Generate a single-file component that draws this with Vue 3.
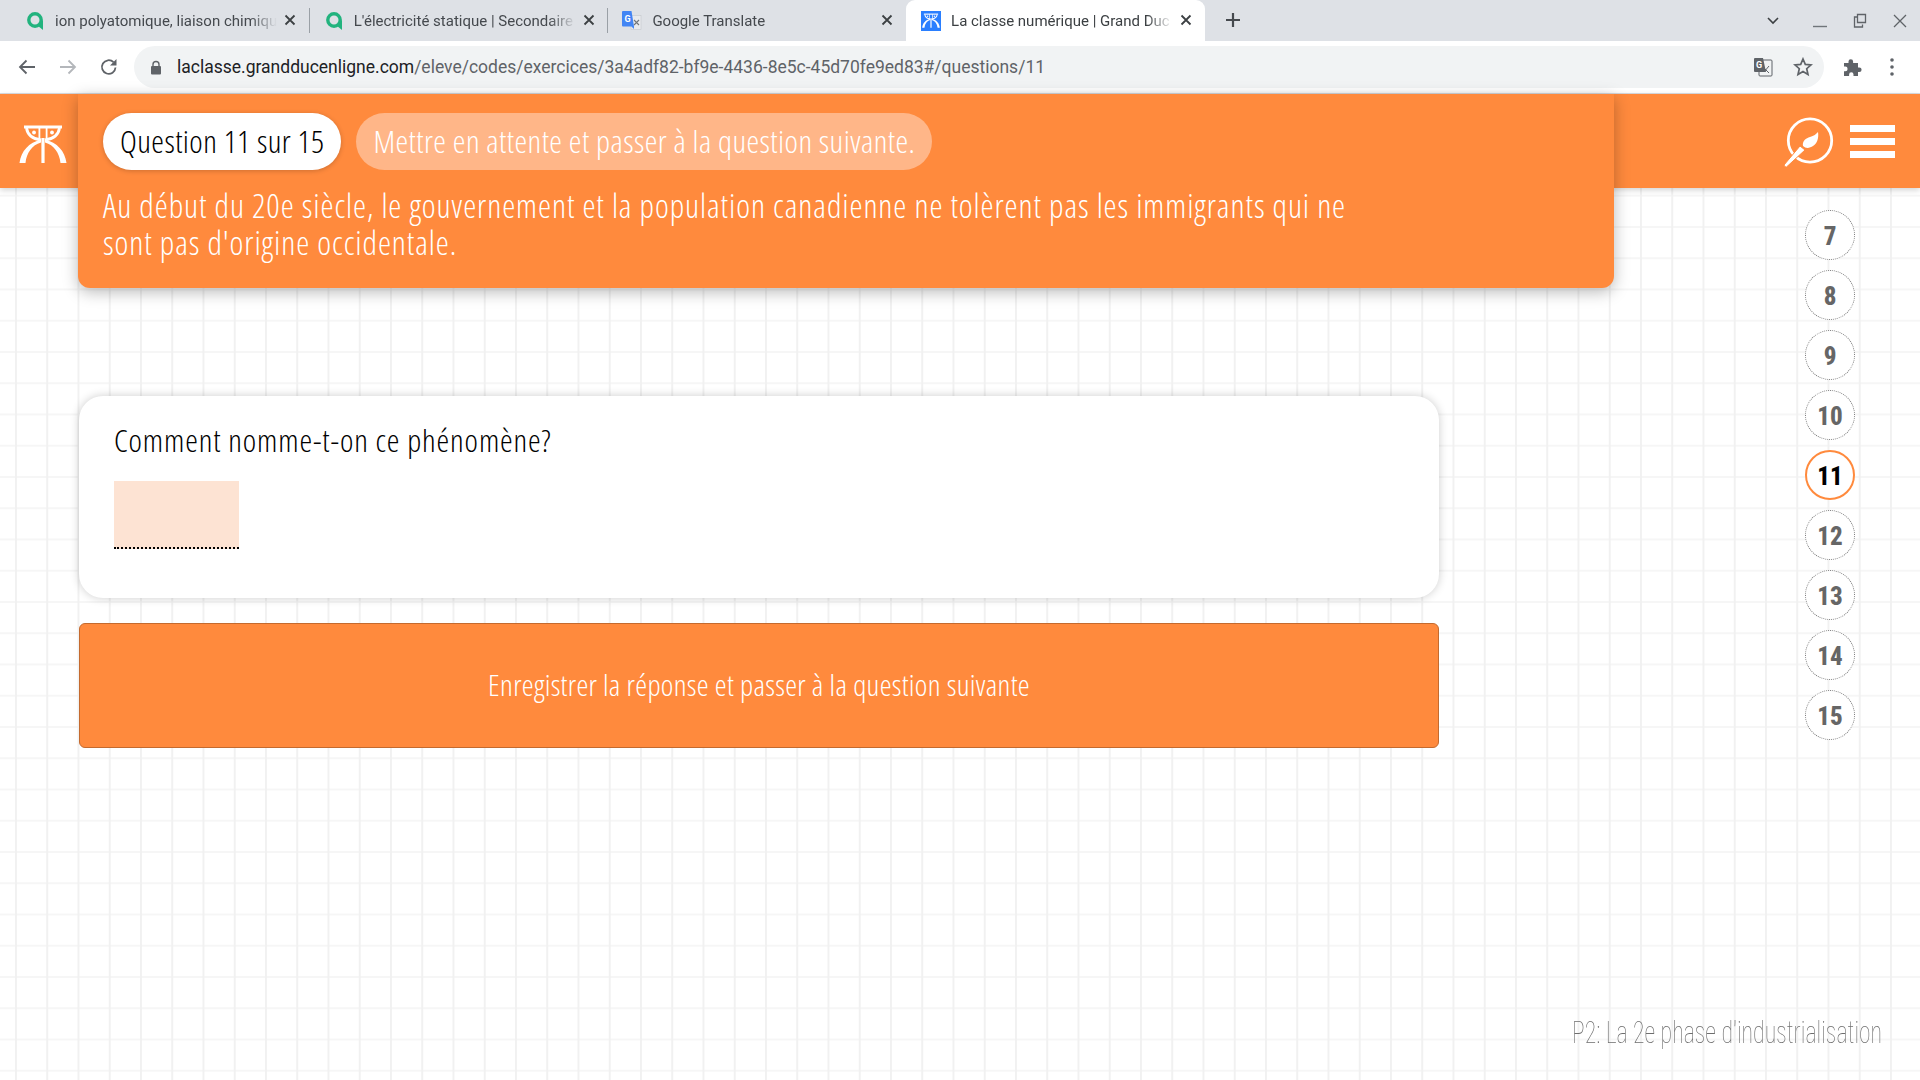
<template>
  <div class="page">
    <svg width="0" height="0" class="defs">
      <symbol id="logo" viewBox="0 0 48 38">
        <path d="M5 .500h38v3H5z" fill="currentColor"/>
        <path d="M7.500 3C8.500 10 14 14 22 15M40.500 3C39.500 10 34 14 26 15" fill="none" stroke="currentColor" stroke-width="2.800"/>
        <circle cx="15" cy="7.500" r="1.900" fill="currentColor"/>
        <circle cx="33" cy="7.500" r="1.900" fill="currentColor"/>
        <path d="M19.500 2h1.800v12h-1.800zM26.700 2h1.800v12h-1.800z" fill="currentColor"/>
        <path d="M22.400 13h3.200v25h-3.200z" fill="currentColor"/>
        <path d="M.5 38C2 26 10 17.500 22 14.500v3C13 20 7.500 28 6.500 38zM47.500 38C46 26 38 17.500 26 14.500v3C35 20 40.500 28 41.500 38z" fill="currentColor"/>
      </symbol>
    </svg>

    <div class="tabstrip">
      <div v-for="t in tabs" :key="t.title" class="tab" :class="{ active: t.active, sep: t.sep }">
        <span class="fav">
          <svg v-if="t.icon === 'q'" width="20" height="20" viewBox="0 0 20 20">
            <circle cx="10" cy="9" r="6.200" fill="none" stroke="#22b37e" stroke-width="3.400"/>
            <path d="M12.500 14.500l5.500 4.500V9z" fill="#22b37e"/>
          </svg>
          <svg v-else-if="t.icon === 'g'" width="20" height="20" viewBox="0 0 20 20">
            <rect x="9" y="4.500" width="10" height="14" fill="#e8eaed" stroke="#c4c7cb" stroke-width=".6"/>
            <path d="M12 9l5 5M17 9l-5 5" stroke="#70757a" stroke-width="1.100"/>
            <path d="M0 1a1 1 0 0 1 1-1h8.500L12 15.500V18l-2.500-2.500H1a1 1 0 0 1-1-1z" fill="#4285f4"/>
            <text x="2.500" y="11" class="gtxt">G</text>
          </svg>
          <span v-else class="blue"><svg width="18" height="15"><use href="#logo"/></svg></span>
        </span>
        <span class="title">{{ t.title }}</span>
        <svg class="x" width="12" height="12" viewBox="0 0 12 12"><path d="M1.500 1.500l9 9M10.500 1.500l-9 9" stroke="#3c4043" stroke-width="1.800"/></svg>
      </div>
      <svg class="plus" width="16" height="16" viewBox="0 0 16 16"><path d="M8 1v14M1 8h14" stroke="#45494e" stroke-width="2.200"/></svg>
      <div class="winctl">
        <svg class="chev" width="14" height="10" viewBox="0 0 14 10"><path d="M2 2l5 5 5-5" fill="none" stroke="#3c4043" stroke-width="1.600"/></svg>
        <svg width="16" height="16" viewBox="0 0 16 16"><path d="M1 13.500h14" stroke="#70757a" stroke-width="1.400"/></svg>
        <svg width="16" height="16" viewBox="0 0 16 16"><path d="M5.500 1.500h8v8h-8zM5 4H2.500v10h8v-2.500" fill="none" stroke="#5f6368" stroke-width="1.300"/></svg>
        <svg width="16" height="16" viewBox="0 0 16 16"><path d="M2 2l12 12M14 2L2 14" stroke="#5f6368" stroke-width="1.300"/></svg>
      </div>
    </div>

    <div class="toolbar">
      <svg class="nav" width="20" height="20" viewBox="0 0 20 20"><path d="M18 10H3M9.500 3.500L3 10l6.500 6.500" fill="none" stroke="#5f6368" stroke-width="1.800"/></svg>
      <svg class="nav" width="20" height="20" viewBox="0 0 20 20"><path d="M2 10h15M10.500 3.500L17 10l-6.500 6.500" fill="none" stroke="#b4b7bb" stroke-width="1.800"/></svg>
      <svg class="nav" width="20" height="20" viewBox="0 0 20 20"><path d="M16.500 10.500A6.800 6.800 0 1 1 14.500 5.200" fill="none" stroke="#5f6368" stroke-width="1.800"/><path d="M17.500 2v6.500H11z" fill="#5f6368"/></svg>
      <div class="omnibox">
        <svg width="12" height="15" viewBox="0 0 12 15"><path d="M3 6V4.500a3 3 0 0 1 6 0V6" fill="none" stroke="#5f6368" stroke-width="1.400"/><rect x="1" y="6" width="10" height="8.500" rx="1" fill="#5f6368"/></svg>
        <span class="url"><b>laclasse.grandducenligne.com</b>/eleve/codes/exercices/3a4adf82-bf9e-4436-8e5c-45d70fe9ed83#/questions/11</span>
        <svg class="tr" width="20" height="20" viewBox="0 0 20 20">
          <rect x="6" y="3" width="13" height="16" rx="1" fill="#f1f3f4" stroke="#5f6368"/>
          <path d="M10 10l6 6M16 9l-5 6" stroke="#5f6368"/>
          <path d="M1 2a1 1 0 0 1 1-1h8l3 14H2a1 1 0 0 1-1-1z" fill="#5f6368"/>
          <text x="3" y="11" class="gtxt">G</text>
        </svg>
        <svg width="20" height="20" viewBox="0 0 20 20"><path d="M10 2l2.300 5.400 5.700.5-4.300 3.800 1.300 5.700-5-3-5 3 1.300-5.700L2 7.900l5.700-.5z" fill="none" stroke="#5f6368" stroke-width="1.700"/></svg>
      </div>
      <svg class="puzzle" width="20" height="20" viewBox="0 0 20 20"><path d="M2 6h4.500V4.500a2.300 2.300 0 0 1 4.600 0V6H16v4.500h1.300a2.300 2.300 0 0 1 0 4.600H16V19h-4.500v-1.500a2.200 2.200 0 0 0-4.400 0V19H2v-4.800h1.300a2.300 2.300 0 0 0 0-4.600H2z" fill="#5f6368"/></svg>
      <svg class="dots" width="6" height="20" viewBox="0 0 6 20"><circle cx="3" cy="3" r="1.800" fill="#5f6368"/><circle cx="3" cy="10" r="1.800" fill="#5f6368"/><circle cx="3" cy="17" r="1.800" fill="#5f6368"/></svg>
    </div>

    <div class="app">
      <header class="topbar">
        <svg class="logo" width="48" height="38"><use href="#logo"/></svg>
        <div class="top-icons">
          <svg width="52" height="54" viewBox="0 0 52 54">
            <circle cx="27" cy="26.500" r="21.700" fill="none" stroke="#fff" stroke-width="2.800"/>
            <path d="M1 51L17 32l5 4L3.500 53q-2 .5-2.500-2z" fill="#fff" stroke="#ff8a3d" stroke-width="1"/>
            <path d="M20 32c-1-5 3-8 7-9 4-1 6-3 8-5 1 6-1 12-5 14-3 2-7 3-10 0z" fill="#fff"/>
          </svg>
          <div class="burger"><i></i><i></i><i></i></div>
        </div>
      </header>

      <div class="body">
        <main class="content">
          <section class="banner">
            <div class="pills">
              <span class="pill current">Question 11 sur 15</span>
              <span class="pill skip">Mettre en attente et passer à la question suivante.</span>
            </div>
            <p class="statement">Au début du 20e siècle, le gouvernement et la population canadienne ne tolèrent pas les immigrants qui ne<br>sont pas d'origine occidentale.</p>
          </section>
          <section class="card">
            <p class="ask">Comment nomme-t-on ce phénomène?</p>
            <div class="blank"></div>
          </section>
          <button class="save">Enregistrer la réponse et passer à la question suivante</button>
        </main>
        <nav class="rail">
          <span v-for="n in questions" :key="n" class="dot" :class="{ on: n === 11 }">{{ n }}</span>
        </nav>
      </div>

      <footer class="chapter"><span>P2: La 2e phase d'industrialisation</span></footer>
    </div>
  </div>
</template>

<script setup>
const tabs = [
  { title: 'ion polyatomique, liaison chimique', icon: 'q', sep: true },
  { title: "L'électricité statique | Secondaire", icon: 'q', sep: true },
  { title: 'Google Translate', icon: 'g' },
  { title: 'La classe numérique | Grand Duc en ligne', icon: 'l', active: true },
]
const questions = [7, 8, 9, 10, 11, 12, 13, 14, 15]
</script>

<style>
html, body { margin: 0; overflow: hidden; }
</style>

<style scoped>
.page { width: 1920px; height: 1080px; display: flex; flex-direction: column; font-family: "Roboto", sans-serif; background: #fff; }
.defs { position: absolute; }

.tabstrip { height: 41px; background: #dee1e6; display: flex; padding-left: 10px; align-items: flex-start; }
.tab { width: 298.700px; height: 41px; box-sizing: border-box; display: flex; align-items: center; padding-left: 15px; position: relative; color: #45494e; font-size: 15px; }
.tab.active { background: #fff; color: #3c4043; border-radius: 9px 9px 0 0; }
.tab.sep::after { content: ""; position: absolute; right: -1px; top: 8px; height: 25px; width: 1px; background: #9aa0a6; }
.fav { width: 20px; height: 20px; margin-right: 10px; display: flex; }
.blue { width: 20px; height: 20px; background: #2a7fff; color: #fff; display: flex; align-items: center; justify-content: center; }
.gtxt { font: bold 9px "Roboto", sans-serif; fill: #fff; }
.title { width: 222px; white-space: nowrap; overflow: hidden; -webkit-mask-image: linear-gradient(90deg, #000 88%, transparent); mask-image: linear-gradient(90deg, #000 88%, transparent); }
.x { position: absolute; left: 274px; top: 14px; }
.plus { margin: 12px 0 0 20px; }
.winctl { margin-left: auto; display: flex; align-items: center; height: 41px; gap: 24px; padding-right: 12px; }
.chev { margin-right: 8px; }

.toolbar { height: 53px; box-sizing: border-box; border-bottom: 1px solid #dadce0; display: flex; align-items: flex-start; padding: 5px 0 0 17px; background: #fff; }
.nav { margin: 11px 21px 0 0; }
.omnibox { width: 1690px; height: 42px; margin-left: -6px; background: #f1f3f4; border-radius: 21px; display: flex; align-items: center; padding: 0 11px 0 16px; box-sizing: border-box; }
.url { margin-left: 15px; font-size: 17.500px; color: #5f6368; white-space: nowrap; }
.url b { font-weight: 400; color: #202124; }
.tr { margin-left: auto; margin-right: 20px; }
.puzzle { margin: 11px 0 0 18px; }
.dots { margin: 11px 0 0 27px; }

.app { flex: 1; display: flex; flex-direction: column; position: relative; background-color: #fff; background-image: linear-gradient(90deg, #f1f1f1 2px, transparent 2px), linear-gradient(#f6f6f6 2px, transparent 2px); background-size: 31.250px 31.250px; background-position: 15px 7px; font-family: "Open Sans", sans-serif; font-stretch: 75%; font-weight: 300; }
.topbar { height: 94px; flex: none; background: #ff8a3d; box-shadow: 0 2px 6px rgba(0, 0, 0, .18); display: flex; align-items: center; justify-content: space-between; padding: 0 25px 0 19px; color: #fff; }
.logo { margin-top: 6px; }
.top-icons { display: flex; align-items: center; gap: 15px; }
.burger { width: 45px; display: flex; flex-direction: column; gap: 6px; }
.burger i { height: 7px; background: #fff; display: block; }

.body { display: flex; margin-top: -94px; position: relative; }
.content { margin-left: 78px; width: 1536px; }
.banner { height: 194px; box-sizing: border-box; background: #ff8a3d; border-radius: 0 0 12px 12px; padding: 19px 25px 0; box-shadow: 0 4px 16px rgba(0, 0, 0, .28); color: #fff; }
.pills { display: flex; gap: 15px; }
.pill { height: 57px; box-sizing: border-box; border-radius: 29px; padding: 0 17px 3px; display: flex; align-items: center; font-size: 32px; letter-spacing: .43px; white-space: nowrap; }
.pill.current { background: #fff; color: #000; font-weight: 350; box-shadow: 0 1px 5px rgba(0, 0, 0, .2); }
.pill.skip { background: #ffb688; color: #fff; }
.statement { margin: 17px 0 0; font-size: 33px; line-height: 37px; letter-spacing: .92px; white-space: nowrap; }
.card { width: 1360px; height: 202px; box-sizing: border-box; margin: 108px 0 0 1px; background: #fff; border-radius: 24px; box-shadow: 0 0 10px rgba(0, 0, 0, .2); padding: 24px 35px 0; }
.ask { margin: 0; font-size: 32px; line-height: 40px; letter-spacing: .87px; color: #000; font-weight: 350; white-space: nowrap; }
.blank { width: 125px; height: 66px; margin-top: 21px; background: #fde3d3; border-bottom: 2px dotted #000; }
.save { display: block; width: 1360px; height: 125px; margin: 25px 0 0 1px; padding: 0 0 3px; background: #ff8a3d; border: 1px solid #c46a2e; border-radius: 6px; color: #fff; font-family: inherit; font-stretch: inherit; font-weight: 300; font-size: 30px; letter-spacing: .3px; }

.rail { margin: 116px 0 0 191px; display: flex; flex-direction: column; gap: 10px; }
.dot { width: 50px; height: 50px; box-sizing: border-box; border: 1px dotted #777; border-radius: 50%; padding-top: 2px; display: flex; align-items: center; justify-content: center; font-family: "Roboto", sans-serif; font-stretch: 75%; font-weight: 800; font-size: 25px; color: #666; background: #fff; }
.dot.on { border: 2px solid #ff8a3d; color: #000; }

.chapter { margin-top: auto; padding: 0 38px 29px 0; text-align: right; font-family: "Roboto", sans-serif; font-size: 32px; font-weight: 100; color: #6e6e6e; }
.chapter span { display: inline-block; white-space: nowrap; transform: scaleX(.745); transform-origin: right center; }
</style>
